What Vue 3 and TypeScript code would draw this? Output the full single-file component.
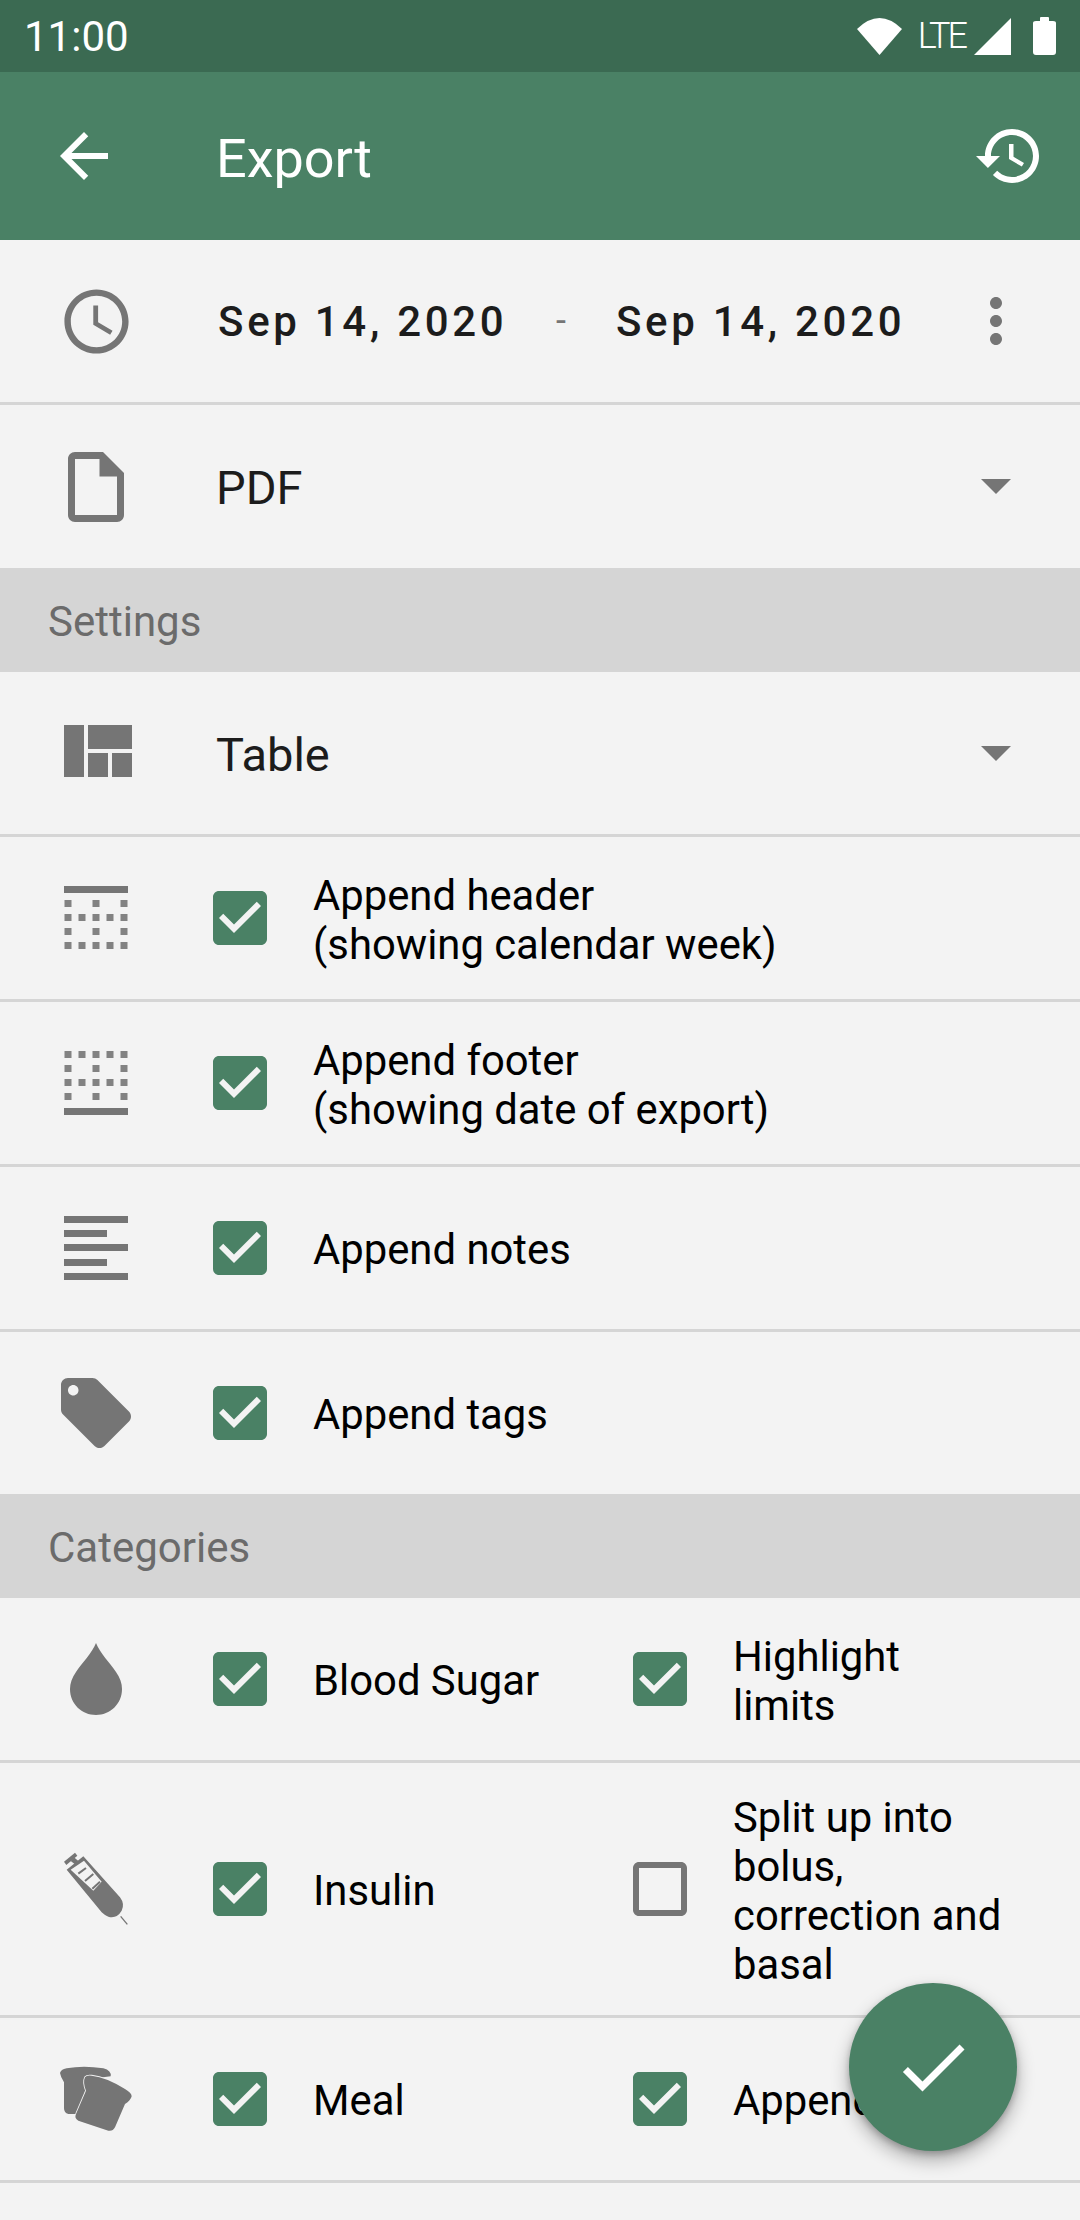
<template>
  <div class="screen">
    <div class="status-bar">
      <span class="status-time">11:00</span>
      <div class="status-icons">
        <svg class="status-wifi" viewBox="0 0 45 37"><path d="M0 11Q22.500 -11 45 11L22.500 37z" /></svg>
        <span class="status-lte">LTE</span>
        <svg class="status-signal" viewBox="0 0 37 37"><path d="M37 0V37H0z" /></svg>
        <svg class="status-battery" viewBox="0 0 23 38"><path d="M7 4V1Q7 0 8 0H15Q16 0 16 1V4H20Q23 4 23 6V35Q23 38 20 38H3Q0 38 0 35V6Q0 4 3 4z" /></svg>
      </div>
    </div>

    <div class="app-bar">
      <svg class="bar-icon" viewBox="0 0 24 24"><path d="M20 11H7.830l5.590-5.590L12 4l-8 8 8 8 1.410-1.410L7.830 13H20v-2z" /></svg>
      <span class="app-title">Export</span>
      <svg class="bar-icon bar-icon--end" viewBox="0 0 24 24"><path d="M13 3c-4.970 0-9 4.030-9 9H1l3.890 3.890.07.140L9 12H6c0-3.870 3.130-7 7-7s7 3.130 7 7-3.130 7-7 7c-1.930 0-3.680-.79-4.940-2.060l-1.420 1.420C8.270 19.990 10.510 21 13 21c4.970 0 9-4.030 9-9s-4.030-9-9-9zm-1 5v5l4.280 2.540.72-1.210-3.500-2.080V8H12z" /></svg>
    </div>

    <div class="row row--line">
      <div class="row-icon">
        <svg class="clock" viewBox="0 0 24 24"><path d="M11.990 2C6.470 2 2 6.480 2 12s4.470 10 9.990 10C17.520 22 22 17.520 22 12S17.520 2 11.990 2zM12 20c-4.420 0-8-3.580-8-8s3.580-8 8-8 8 3.580 8 8-3.580 8-8 8zm.5-13H11v6l5.250 3.150.75-1.230-4.500-2.670z" /></svg>
      </div>
      <span class="date date--from">Sep 14, 2020</span>
      <span class="date-sep">-</span>
      <span class="date">Sep 14, 2020</span>
      <svg class="more" viewBox="0 0 24 24"><path d="M12 8c1.100 0 2-.9 2-2s-.9-2-2-2-2 .9-2 2 .9 2 2 2zm0 2c-1.100 0-2 .9-2 2s.9 2 2 2 2-.9 2-2-.9-2-2-2zm0 6c-1.100 0-2 .9-2 2s.9 2 2 2 2-.9 2-2-.9-2-2-2z" /></svg>
    </div>

    <div class="row row--pdf">
      <div class="row-icon">
        <svg class="file" viewBox="0 0 24 24"><path d="M6 2c-1.100 0-2 .9-2 2v16c0 1.100.9 2 2 2h12c1.100 0 2-.9 2-2V8l-6-6H6zm0 2h7v5h5v11H6V4z" /></svg>
      </div>
      <span class="select-text">PDF</span>
      <span class="arrow"></span>
    </div>

    <div class="section">Settings</div>

    <div class="row row--line">
      <div class="row-icon">
        <svg class="quilt" viewBox="0 0 24 24"><path d="M10 18h5v-6h-5v6zm-6 0h5V5H4v13zm12 0h5v-6h-5v6zM10 5v6h11V5H10z" /></svg>
      </div>
      <span class="select-text">Table</span>
      <span class="arrow"></span>
    </div>

    <div v-for="item in settings" :key="item.label" class="row" :class="{ 'row--line': item.line }">
      <div class="row-icon">
        <svg v-if="item.icon === 'header' || item.icon === 'footer'" class="grid-icon" viewBox="0 0 64 64">
          <rect x="0" :y="item.icon === 'header' ? 0 : 57" width="64" height="7" />
          <rect
            v-for="dot in gridDots(item.icon)"
            :key="dot.x + '-' + dot.y"
            :x="dot.x"
            :y="dot.y"
            width="7"
            height="7"
            opacity="0.9"
          />
        </svg>
        <svg v-else-if="item.icon === 'notes'" class="grid-icon" viewBox="0 0 64 64">
          <rect x="0" y="0" width="64" height="7" />
          <rect x="0" y="14" width="43" height="7" />
          <rect x="0" y="28" width="64" height="7" />
          <rect x="0" y="43" width="43" height="7" />
          <rect x="0" y="57" width="64" height="7" />
        </svg>
        <svg v-else class="tag" viewBox="0 0 24 24"><path d="M21.410 11.580l-9-9C12.050 2.220 11.550 2 11 2H4c-1.100 0-2 .9-2 2v7c0 .55.22 1.050.59 1.420l9 9c.36.36.86.58 1.410.58.55 0 1.050-.22 1.410-.59l7-7c.37-.36.59-.86.59-1.410 0-.55-.23-1.060-.59-1.420zM5.500 7C4.670 7 4 6.330 4 5.500S4.670 4 5.500 4 7 4.670 7 5.500 6.330 7 5.500 7z" /></svg>
      </div>
      <svg class="check" viewBox="0 0 24 24"><path :d="checkedPath" /></svg>
      <span class="label">
        <template v-for="(line, i) in item.lines" :key="i"><br v-if="i > 0" />{{ line }}</template>
      </span>
    </div>

    <div class="section">Categories</div>

    <div v-for="cat in categories" :key="cat.label" class="row row--line" :class="{ 'row--tall': cat.tall }">
      <div class="row-icon">
        <svg v-if="cat.icon === 'drop'" class="drop" viewBox="0 0 52 72"><path d="M26 0C22 10 12 20 6 29C2 35 0 40 0 46C0 61 12 72 26 72C40 72 52 61 52 46C52 40 50 35 46 29C40 20 30 10 26 0z" /></svg>
        <svg v-else-if="cat.icon === 'syringe'" class="cat-icon" viewBox="-12 0 300 300">
          <path d="M42 68 75 41 82 50 49 78z" />
          <path d="M62 66 72 55 85 66 75 76z" />
          <path fill-rule="evenodd" d="M50 92 100 52 210 175Q225 195 215 215 200 240 175 233 165 230 155 220zM62 92 102 65 155 128 130 155z" />
          <path class="syringe-line" d="M85 104 108 87M105 126 130 105M127 149 150 128" />
          <path class="syringe-line syringe-line--thin" d="M212 232 232 256" />
        </svg>
        <svg v-else class="cat-icon" viewBox="-12 0 300 300">
          <path d="M30 72Q32 62 50 58 100 48 160 58 185 65 182 82L120 90 80 195 55 195Q42 192 42 178L42 100Q32 85 30 72z" />
          <path class="bread-front" d="M105 85Q110 78 125 80 170 85 225 120 245 132 245 142 242 155 225 165L195 235Q188 248 175 245L85 215Q72 208 78 195L108 125Q98 100 105 85z" />
        </svg>
      </div>
      <svg class="check" viewBox="0 0 24 24"><path :d="checkedPath" /></svg>
      <span class="label cat-label">{{ cat.label }}</span>
      <svg class="check check--option" :class="{ 'check--off': !cat.optionOn }" viewBox="0 0 24 24"><path :d="cat.optionOn ? checkedPath : uncheckedPath" /></svg>
      <span class="label option-label">{{ cat.option }}</span>
    </div>

    <button class="fab">
      <svg class="fab-check" viewBox="0 0 24 24"><path d="M9 16.170L4.830 12l-1.420 1.410L9 19 21 7l-1.410-1.410z" /></svg>
    </button>
  </div>
</template>

<script setup lang="ts">
  const checkedPath = 'M19 3H5c-1.110 0-2 .9-2 2v14c0 1.100.89 2 2 2h14c1.110 0 2-.9 2-2V5c0-1.100-.89-2-2-2zm-9 14l-5-5 1.410-1.410L10 14.170l7.590-7.590L19 8l-9 9z'
  const uncheckedPath = 'M19 5v14H5V5h14m0-2H5c-1.100 0-2 .9-2 2v14c0 1.100.9 2 2 2h14c1.100 0 2-.9 2-2V5c0-1.100-.9-2-2-2z'

  const settings = [
    { label: 'header', icon: 'header', lines: ['Append header', '(showing calendar week)'], line: true },
    { label: 'footer', icon: 'footer', lines: ['Append footer', '(showing date of export)'], line: true },
    { label: 'notes', icon: 'notes', lines: ['Append notes'], line: true },
    { label: 'tags', icon: 'tag', lines: ['Append tags'], line: false },
  ]

  const categories = [
    { label: 'Blood Sugar', icon: 'drop', option: 'Highlight limits', optionOn: true, tall: false },
    { label: 'Insulin', icon: 'syringe', option: 'Split up into bolus, correction and basal', optionOn: false, tall: true },
    { label: 'Meal', icon: 'bread', option: 'Append notes', optionOn: true, tall: false },
  ]

  // dotted table: full rows alternate with rows of only three dots
  const gridDots = (icon: string) => {
    const dots: { x: number; y: number }[] = []
    const top = icon === 'header' ? 14 : 0
    for (let r = 0; r < 4; r++) {
      const isFull = icon === 'header' ? r % 2 === 1 : r % 2 === 0
      for (let c = 0; c < 5; c++) {
        if (isFull || c % 2 === 0) dots.push({ x: c * 14 + 0.5, y: top + r * 14 })
      }
    }
    return dots
  }
</script>

<style>
html, body {
  margin: 0;
  background: #f3f3f3;
}
</style>

<style scoped>
.screen {
  position: relative;
  width: 1080px;
  height: 2220px;
  overflow: hidden;
  background: #f3f3f3;
  font-family: Roboto, sans-serif;
  color: #000;
}

.status-bar {
  height: 72px;
  background: #3b6a52;
  color: #fff;
  display: flex;
  align-items: center;
  justify-content: space-between;
  padding: 0 24px;
  box-sizing: border-box;
}

.status-time {
  font-size: 42px;
}

.status-icons {
  display: flex;
  align-items: center;
}

.status-icons svg {
  fill: #fff;
}

.status-wifi {
  width: 45px;
  height: 37px;
}

.status-lte {
  font-size: 36px;
  font-weight: 300;
  letter-spacing: -3px;
  margin-left: 15.500px;
  margin-right: 9px;
}

.status-signal {
  width: 37px;
  height: 37px;
}

.status-battery {
  width: 23px;
  height: 38px;
  margin-left: 22px;
}

.app-bar {
  height: 168px;
  background: #4a8165;
  color: #fff;
  display: flex;
  align-items: center;
  padding: 0 35px 0 48px;
}

.bar-icon {
  width: 72px;
  height: 72px;
  fill: #fff;
}

.bar-icon--end {
  margin-left: auto;
}

.app-title {
  font-size: 54px;
  margin-left: 96px;
  padding-top: 5px;
}

.row {
  height: 162px;
  display: flex;
  align-items: center;
}

.row--line {
  height: 165px;
  box-sizing: border-box;
  border-bottom: 3px solid #d5d5d5;
}

.row--pdf {
  height: 163px;
}

.row--tall {
  height: 255px;
}

.row-icon {
  width: 192px;
  flex: none;
  display: flex;
  align-items: center;
  justify-content: center;
  fill: #757575;
}

.clock {
  width: 77px;
  height: 77px;
}

.date {
  font-size: 42px;
  font-weight: 500;
  letter-spacing: 3.700px;
  color: #1c1c1c;
  margin-left: 24px;
}

.date--from {
  margin-left: 26px;
}

.date-sep {
  font-size: 36px;
  color: #757575;
  margin-left: 48.500px;
  margin-right: 26px;
}

.more {
  width: 72px;
  height: 72px;
  fill: #757575;
  margin-left: auto;
  margin-right: 48px;
}

.file {
  width: 84px;
  height: 84px;
}

.select-text {
  font-size: 47px;
  color: #1c1c1c;
  margin-left: 24px;
  padding-top: 2px;
}

.arrow {
  width: 0;
  height: 0;
  border-left: 15px solid transparent;
  border-right: 15px solid transparent;
  border-top: 15px solid #757575;
  margin-left: auto;
  margin-right: 69px;
}

.section {
  height: 104px;
  box-sizing: border-box;
  padding-top: 3px;
  background: #d5d5d5;
  color: #6b6b6b;
  font-size: 42px;
  display: flex;
  align-items: center;
  padding-left: 48px;
}

.quilt {
  width: 96px;
  height: 96px;
}

.grid-icon {
  width: 64px;
  height: 64px;
}

.tag {
  width: 84px;
  height: 84px;
}

.drop {
  width: 52px;
  height: 72px;
}

.cat-icon {
  width: 100px;
  height: 100px;
}

.syringe-line {
  fill: none;
  stroke: #757575;
  stroke-width: 6;
}

.syringe-line--thin {
  stroke-width: 4;
}

.bread-front {
  stroke: #f3f3f3;
  stroke-width: 5;
  paint-order: stroke;
}

.check {
  width: 72px;
  height: 72px;
  flex: none;
  fill: #4a8165;
  margin-left: 12px;
}

.check--option {
  margin-left: 0;
}

.check--off {
  fill: #757575;
}

.label {
  font-size: 41.800px;
  line-height: 49px;
  margin-left: 37px;
  padding-top: 3px;
}

.cat-label {
  width: 311px;
  flex: none;
}

.option-label {
  width: 272px;
  flex: none;
}

.fab {
  position: absolute;
  right: 63px;
  bottom: 69px;
  width: 168px;
  height: 168px;
  border: none;
  padding: 0;
  border-radius: 50%;
  background: #4a8165;
  box-shadow: 0 9px 18px rgba(0, 0, 0, 0.3), 0 3px 6px rgba(0, 0, 0, 0.2);
  display: flex;
  align-items: center;
  justify-content: center;
}

.fab-check {
  width: 84px;
  height: 84px;
  fill: #fff;
}
</style>
